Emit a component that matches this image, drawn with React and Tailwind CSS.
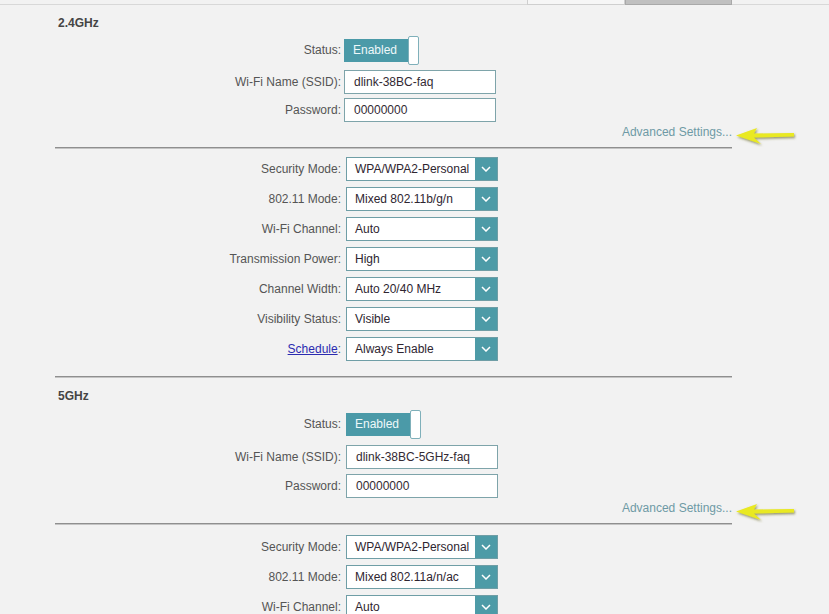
import React from 'react'

const font = "font-['Liberation_Sans',Arial,sans-serif]"

// label column ends at x=341, like the router page
const Row = ({ label, children, className = '' }) => (
  <div className={`flex items-center ${className}`}>
    <div className="w-[286px] text-right text-[12px] leading-[14px] text-[#555]">{label}</div>
    {children}
  </div>
)

const Toggle = ({ offset }) => (
  <div className={`flex items-center ${offset}`}>
    <div className="flex h-[23px] w-[66px] items-center bg-[#4b9aa8] pl-[9px] text-[12px] text-[#eef8fa]">
      Enabled
    </div>
    <div className="-ml-[2px] h-[29px] w-[11px] rounded-[2px] border border-[#7fb0ba] bg-white" />
  </div>
)

const TextBox = ({ value, offset }) => (
  <div
    className={`flex h-[24px] w-[152px] items-center border border-[#7ea4aa] bg-white pl-[9px] text-[12px] text-[#332a33] ${offset}`}
  >
    {value}
  </div>
)

const Select = ({ value }) => (
  <div className="ml-[5px] flex h-[24px] w-[152px] items-stretch border border-[#6f9ea6] bg-white">
    <div className="flex flex-1 items-center pl-[8px] text-[12px] text-[#2e2530]">{value}</div>
    <div className="flex w-[22px] items-center justify-center bg-[#4d9ba7]">
      <svg width="10" height="6" viewBox="0 0 10 6">
        <path d="M1 1 L5 5 L9 1" fill="none" stroke="#fff" strokeWidth="1.5" />
      </svg>
    </div>
  </div>
)

const Arrow = () => (
  <svg
    className="absolute left-[calc(100%+1px)] top-[-8px]"
    width="66"
    height="30"
    viewBox="0 0 66 30"
  >
    <defs>
      <filter id="sh" x="-20%" y="-40%" width="140%" height="180%">
        <feDropShadow dx="1" dy="1.5" stdDeviation="1" floodColor="#6b6b2a" floodOpacity="0.7" />
      </filter>
    </defs>
    <path
      d="M3 18.5 L24 11 L21 16.5 L61 16 L61 19.5 L21 20.5 L28 27 Z"
      fill="#e9e920"
      filter="url(#sh)"
    />
  </svg>
)

const Advanced = ({ className = '' }) => (
  <div className={`flex justify-end ${className}`}>
    <div className="relative text-[12px] leading-[14px] text-[#6e9aa5]">
      Advanced Settings...
      <Arrow />
    </div>
  </div>
)

const Divider = ({ className = '' }) => (
  <div className={`h-[2px] border-t border-[#8f8f8f] bg-[#c4c4c4] ${className}`} />
)

const Heading = ({ children, className = '' }) => (
  <div className={`pl-[3px] text-[12px] font-bold leading-[14px] text-[#454545] ${className}`}>{children}</div>
)

const App = () => {
  const selects24 = [
    ['Security Mode:', 'WPA/WPA2-Personal'],
    ['802.11 Mode:', 'Mixed 802.11b/g/n'],
    ['Wi-Fi Channel:', 'Auto'],
    ['Transmission Power:', 'High'],
    ['Channel Width:', 'Auto 20/40 MHz'],
    ['Visibility Status:', 'Visible'],
  ]
  const selects5 = [
    ['Security Mode:', 'WPA/WPA2-Personal'],
    ['802.11 Mode:', 'Mixed 802.11a/n/ac'],
    ['Wi-Fi Channel:', 'Auto'],
  ]

  return (
    <div className={`h-[614px] w-[829px] overflow-hidden bg-[#f2f2f2] ${font}`}>
      {/* tab strip, cut off at the top */}
      <div className="flex h-[5px] justify-end border-b border-[#d8d8d8] pr-[97px]">
        <div className="h-[5px] w-[98px] border-x border-b border-[#cfcfcf] bg-[#f6f6f6]" />
        <div className="h-[5px] w-[107px] border-x border-b border-[#a9a9a9] bg-[#c0c0c0]" />
      </div>

      <div className="w-[732px] pl-[55px]">
        <Heading className="mt-[11px]">2.4GHz</Heading>

        <Row label="Status:" className="mt-[5px] h-[30px]">
          <Toggle offset="ml-[3px]" />
        </Row>
        <Row label="Wi-Fi Name (SSID):" className="mt-[5px]">
          <TextBox value="dlink-38BC-faq" offset="ml-[3px]" />
        </Row>
        <Row label="Password:" className="mt-[4px]">
          <TextBox value="00000000" offset="ml-[3px]" />
        </Row>

        <Advanced className="mt-[3px]" />
        <Divider className="mt-[8px]" />

        <div className="mt-[8px] flex flex-col gap-[6px]">
          {selects24.map(([label, value]) => (
            <Row key={label} label={label}>
              <Select value={value} />
            </Row>
          ))}
          <Row
            label={
              <>
                <span className="text-[#2b2bb0] underline">Schedule</span>:
              </>
            }
          >
            <Select value="Always Enable" />
          </Row>
        </div>

        <Divider className="mt-[15px]" />

        <Heading className="mt-[11px]">5GHz</Heading>

        <Row label="Status:" className="mt-[6px] h-[30px]">
          <Toggle offset="ml-[5px]" />
        </Row>
        <Row label="Wi-Fi Name (SSID):" className="mt-[6px]">
          <TextBox value="dlink-38BC-5GHz-faq" offset="ml-[5px]" />
        </Row>
        <Row label="Password:" className="mt-[5px]">
          <TextBox value="00000000" offset="ml-[5px]" />
        </Row>

        <Advanced className="mt-[3px]" />
        <Divider className="mt-[8px]" />

        <div className="mt-[10px] flex flex-col gap-[6px]">
          {selects5.map(([label, value]) => (
            <Row key={label} label={label}>
              <Select value={value} />
            </Row>
          ))}
        </div>
      </div>
    </div>
  )
}

export default App
